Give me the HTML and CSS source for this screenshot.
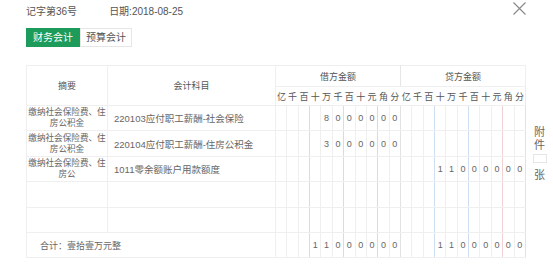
FILE: index.html
```html
<!DOCTYPE html>
<html lang="zh-CN">
<head>
    <meta charset="UTF-8">
    <title>凭证</title>
    <link rel="stylesheet" href="styles.css">
</head>
<body>
    <div class="head">
        <span class="voucher-no">记字第36号</span>
        <span class="voucher-date">日期:2018-08-25</span>
        <span class="close">
            <svg width="13" height="13" viewBox="0 0 13 13"><path d="M0.5 0.5 L12.5 12.5 M12.5 0.5 L0.5 12.5" stroke="#888" stroke-width="1.1" fill="none"/></svg>
        </span>
    </div>

    <div class="tabs">
        <span class="tab active">财务会计</span>
        <span class="tab">预算会计</span>
    </div>

    <div class="voucher">
        <table>
            <thead>
                <tr class="head-top">
                    <th rowspan="2" class="memo">摘要</th>
                    <th rowspan="2" class="acct">会计科目</th>
                    <th colspan="11" class="side-debit">借方金额</th>
                    <th colspan="11">贷方金额</th>
                </tr>
                <tr class="head-units" id="units"></tr>
            </thead>
            <tbody id="entries">
                <tr data-debit="8000000" data-credit="">
                    <td class="memo">缴纳社会保险费、住房公积金</td>
                    <td class="acct">220103应付职工薪酬-社会保险</td>
                </tr>
                <tr data-debit="3000000" data-credit="">
                    <td class="memo">缴纳社会保险费、住房公积金</td>
                    <td class="acct">220104应付职工薪酬-住房公积金</td>
                </tr>
                <tr data-debit="" data-credit="11000000">
                    <td class="memo">缴纳社会保险费、住房公</td>
                    <td class="acct">1011零余额账户用款额度</td>
                </tr>
                <tr data-debit="" data-credit="">
                    <td class="memo"></td>
                    <td class="acct"></td>
                </tr>
                <tr data-debit="" data-credit="">
                    <td class="memo"></td>
                    <td class="acct"></td>
                </tr>
                <tr class="total" data-debit="11000000" data-credit="11000000">
                    <td colspan="2" class="total-text">合计：壹拾壹万元整</td>
                </tr>
            </tbody>
        </table>

        <div class="attach">
            <span>附</span>
            <span>件</span>
            <span class="attach-box"></span>
            <span>张</span>
        </div>
    </div>

    <script>
        const units = ['亿', '千', '百', '十', '万', '千', '百', '十', '元', '角', '分'];

        // column divider classes: groups of three digits, red at the decimal point
        function lineClass(i) {
            if (i === 2 || i === 5) return 'line-blue';
            if (i === 8) return 'line-red';
            if (i === 10) return 'line-side';
            return '';
        }

        // header row with the unit names
        const unitRow = document.getElementById('units');
        for (let side = 0; side < 2; side++) {
            units.forEach(u => {
                const th = document.createElement('th');
                th.className = 'unit';
                th.textContent = u;
                unitRow.appendChild(th);
            });
        }

        // one digit per cell, right aligned into the 11 places
        document.querySelectorAll('#entries tr').forEach(tr => {
            [tr.dataset.debit, tr.dataset.credit].forEach(amount => {
                const padded = amount.padStart(11, ' ');
                for (let i = 0; i < 11; i++) {
                    const td = document.createElement('td');
                    td.className = 'digit ' + lineClass(i);
                    td.textContent = padded[i].trim();
                    tr.appendChild(td);
                }
            });
        });
    </script>
</body>
</html>
```

FILE: styles.css
```css
/* General reset */
* {
    margin: 0;
    padding: 0;
    box-sizing: border-box;
}

body {
    font-family: "Liberation Sans", "Noto Sans CJK SC", sans-serif;
    color: #555;
    background: #fff;
    width: 553px;
    height: 264px;
    overflow: hidden;
}

/* Top line */
.head {
    display: flex;
    align-items: center;
    height: 20px;
    padding: 0 27px 0 26px;
    font-size: 10px;
}

.voucher-date {
    margin-left: 32px;
}

.close {
    margin-left: auto;
    display: flex;
    margin-top: -3px;
}

/* Tabs */
.tabs {
    display: flex;
    margin: 8px 0 0 26px;
}

.tab {
    width: 52px;
    height: 19px;
    line-height: 17px;
    font-size: 10px;
    text-align: center;
    border: 1px solid #e6e6e6;
    color: #555;
}

.tab.active {
    width: 54px;
    background: #1c9b5b;
    border-color: #1c9b5b;
    color: #fff;
}

/* Voucher table */
.voucher {
    display: flex;
    margin-top: 18px;
    padding-left: 26px;
}

table {
    width: 500px;
    border-collapse: collapse;
    table-layout: fixed;
    font-size: 9px;
    color: #666;
    border: 1px solid #ebebeb;
}

th, td {
    border: 1px solid #efefef;
    font-weight: normal;
    text-align: center;
    vertical-align: middle;
    overflow: hidden;
    white-space: nowrap;
}

th.memo {
    width: 81px;
}

th.acct {
    width: 168px;
}

.head-top {
    height: 21px;
}

.head-top th {
    color: #555;
}

th.side-debit {
    border-right-color: #e6e6e6;
}

.head-units {
    height: 19px;
}

th.unit {
    border-left: none;
    border-right: none;
    font-size: 9px;
    color: #555;
}

tbody tr {
    height: 25.4px;
}

td.memo {
    font-size: 8.6px;
    line-height: 11px;
    white-space: normal;
    color: #666;
}

td.acct {
    text-align: left;
    padding-left: 6px;
    font-size: 9.5px;
}

td.digit {
    font-size: 9px;
    color: #666;
}

td.line-blue {
    border-right-color: #cddff0;
}

td.line-red {
    border-right-color: #f0d2d2;
}

td.line-side {
    border-right-color: #e2e2e2;
}

td.total-text {
    text-align: left;
    padding-left: 13px;
    font-size: 9px;
}

/* Attachments counter */
.attach {
    display: flex;
    flex-direction: column;
    align-items: center;
    width: 27px;
    padding-top: 61px;
    font-size: 11px;
    line-height: 13px;
    color: #666;
}

.attach-box {
    width: 14px;
    height: 9px;
    border: 1px solid #e6e6e6;
    margin: 2px 0 6px;
}
```
